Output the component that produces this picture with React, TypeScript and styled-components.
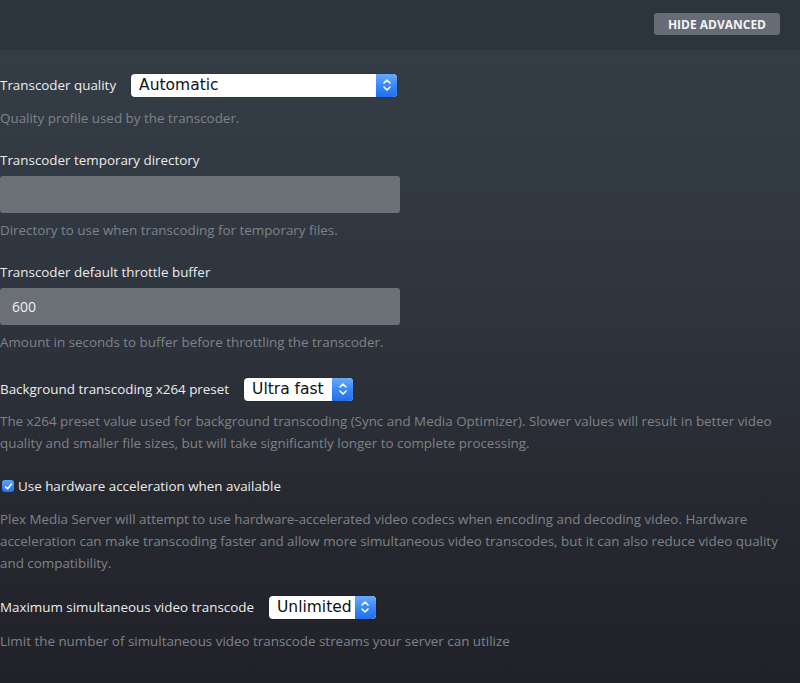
import React from "react";
import styled, { createGlobalStyle } from "styled-components";

const Global = createGlobalStyle`
  html, body { margin: 0; padding: 0; }
  body {
    font-family: "Open Sans", "Noto Sans", sans-serif;
    background: #22222a;
  }
`;

const Page = styled.div`
  width: 800px;
  min-height: 683px;
  display: flex;
  flex-direction: column;
  background: linear-gradient(180deg, #353f48 0px, #2f353e 300px, #272930 500px, #212129 683px);
`;

const Header = styled.div`
  height: 50px;
  background: #2c343e;
  display: flex;
  align-items: center;
  justify-content: flex-end;
  padding: 0 20px;
  box-sizing: border-box;
`;

const HeaderButton = styled.button`
  height: 22px;
  padding: 0 14px;
  border: none;
  border-radius: 3px;
  background: #656c75;
  color: #f4f4f4;
  font-family: "Open Sans", sans-serif;
  font-weight: 700;
  font-size: 12px;
  text-transform: uppercase;
  cursor: pointer;
  margin-top: -2px;
`;

const Content = styled.div`
  padding: 23px 0 0 0;
  width: 780px;
`;

const Group = styled.div<{ $mb?: number }>`
  margin-bottom: ${(p) => p.$mb ?? 21}px;
`;

const InlineRow = styled.div`
  display: flex;
  align-items: center;
  gap: 15px;
  height: 24px;
`;

const Label = styled.div`
  color: #ececec;
  font-size: 13.4px;
  line-height: 20px;
`;

const Desc = styled.div<{ $gap?: number }>`
  color: #7e8389;
  font-size: 13.4px;
  line-height: 22px;
  margin-top: ${(p) => p.$gap ?? 10}px;
`;

const SelectBox = styled.div<{ $w: number }>`
  width: ${(p) => p.$w}px;
  height: 23px;
  display: flex;
  align-items: stretch;
  background: #ffffff;
  border-radius: 4px;
  box-shadow: 0 0 0 0.5px rgba(0, 0, 0, 0.25);
  overflow: hidden;
  box-sizing: border-box;
`;

const SelectText = styled.span`
  flex: 1;
  padding-left: 8px;
  color: #111;
  font-family: "DejaVu Sans", "Liberation Sans", sans-serif;
  font-size: 15.5px;
  line-height: 23px;
  white-space: nowrap;
  overflow: hidden;
`;

const Stepper = styled.span`
  width: 21px;
  background: linear-gradient(180deg, #69a9fb 0%, #3b89f7 50%, #1f6ff0 100%);
  display: flex;
  align-items: center;
  justify-content: center;
  border-radius: 0 4px 4px 0;
`;

const TextField = styled.div`
  margin-top: 6px;
  width: 400px;
  height: 37px;
  box-sizing: border-box;
  background: #6b6f76;
  border-radius: 3px;
  padding: 0 12px;
  display: flex;
  align-items: center;
  color: #eeeeee;
  font-size: 14px;
`;

const CheckRow = styled.label`
  display: flex;
  align-items: center;
  gap: 4px;
  height: 22px;
  color: #ececec;
  font-size: 13.4px;
  padding-left: 2px;
`;

const CheckBox = styled.span`
  width: 12px;
  height: 12px;
  border-radius: 3px;
  background: linear-gradient(180deg, #5ea3fb, #1f6ff0);
  display: flex;
  align-items: center;
  justify-content: center;
`;

const Chevrons = () => (
  <svg width="10" height="14" viewBox="0 0 10 14" fill="none">
    <path d="M2 5 L5 2 L8 5" stroke="#fff" strokeWidth="1.6" strokeLinecap="round" strokeLinejoin="round" />
    <path d="M2 9 L5 12 L8 9" stroke="#fff" strokeWidth="1.6" strokeLinecap="round" strokeLinejoin="round" />
  </svg>
);

const Select = ({ value, width }: { value: string; width: number }) => (
  <SelectBox $w={width}>
    <SelectText>{value}</SelectText>
    <Stepper>
      <Chevrons />
    </Stepper>
  </SelectBox>
);

export default function App() {
  return (
    <>
      <Global />
      <Page>
        <Header>
          <HeaderButton>Hide Advanced</HeaderButton>
        </Header>
        <Content>
          <Group>
            <InlineRow>
              <Label>Transcoder quality</Label>
              <Select value="Automatic" width={266} />
            </InlineRow>
            <Desc>Quality profile used by the transcoder.</Desc>
          </Group>

          <Group>
            <Label>Transcoder temporary directory</Label>
            <TextField />
            <Desc $gap={6}>Directory to use when transcoding for temporary files.</Desc>
          </Group>

          <Group $mb={24}>
            <Label>Transcoder default throttle buffer</Label>
            <TextField>600</TextField>
            <Desc $gap={6}>Amount in seconds to buffer before throttling the transcoder.</Desc>
          </Group>

          <Group>
            <InlineRow>
              <Label>Background transcoding x264 preset</Label>
              <Select value="Ultra fast" width={109} />
            </InlineRow>
            <Desc $gap={9}>
              The x264 preset value used for background transcoding (Sync and Media Optimizer). Slower values will
              result in better video quality and smaller file sizes, but will take significantly longer to complete
              processing.
            </Desc>
          </Group>

          <Group>
            <CheckRow>
              <CheckBox>
                <svg width="9" height="9" viewBox="0 0 9 9" fill="none">
                  <path d="M1.5 4.8 L3.6 6.8 L7.5 2" stroke="#fff" strokeWidth="1.6" strokeLinecap="round" strokeLinejoin="round" />
                </svg>
              </CheckBox>
              Use hardware acceleration when available
            </CheckRow>
            <Desc $gap={11}>
              Plex Media Server will attempt to use hardware-accelerated video codecs when encoding and decoding video.
              Hardware acceleration can make transcoding faster and allow more simultaneous video transcodes, but it can
              also reduce video quality and compatibility.
            </Desc>
          </Group>

          <Group>
            <InlineRow>
              <Label>Maximum simultaneous video transcode</Label>
              <Select value="Unlimited" width={107} />
            </InlineRow>
            <Desc $gap={11}>Limit the number of simultaneous video transcode streams your server can utilize</Desc>
          </Group>
        </Content>
      </Page>
    </>
  );
}
